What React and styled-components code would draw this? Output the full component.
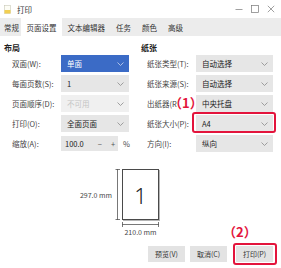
import React from "react";
import styled, { createGlobalStyle } from "styled-components";

const GlobalStyle = createGlobalStyle`
  body {
    margin: 0;
    background: #ffffff;
    font-family: "Noto Sans CJK SC", "Noto Sans", sans-serif;
    color: #2b2b2b;
  }
`;

const Window = styled.div`
  position: relative;
  width: 281px;
  height: 268px;
  display: flex;
  flex-direction: column;
  background: #fff;
  overflow: hidden;
`;

const TitleBar = styled.div`
  height: 18px;
  display: flex;
  align-items: center;
  padding: 0 6px 0 4px;
`;

const Title = styled.div`
  font-size: 7.5px;
  margin-left: 6px;
  color: #333;
  flex: 1;
`;

const Controls = styled.div`
  display: flex;
  align-items: center;
  gap: 8px;
`;

const TabBar = styled.div`
  height: 18px;
  display: flex;
  align-items: stretch;
  background: #ececec;
`;

const Tab = styled.div`
  display: flex;
  align-items: center;
  padding: 0 5.5px;
  font-size: 7.5px;
  color: #333;
  background: ${(p) => (p.$active ? "#ffffff" : "transparent")};
  &:first-child {
    padding: 0 2px 0 4px;
  }
`;

const Columns = styled.div`
  display: flex;
  padding-top: 7px;
`;

const Column = styled.div`
  width: ${(p) => p.$w}px;
  padding-left: ${(p) => p.$pad}px;
  box-sizing: border-box;
`;

const Heading = styled.div`
  font-size: 8px;
  font-weight: 700;
  line-height: 10px;
  margin-bottom: 2px;
  color: #222;
`;

const Row = styled.div`
  display: flex;
  align-items: center;
  height: 17px;
  margin-bottom: 3px;
  padding-left: ${(p) => p.$indent}px;
`;

const Label = styled.div`
  width: 49px;
  font-size: 7.5px;
  color: #444;
  white-space: nowrap;
  overflow: hidden;
`;

const Select = styled.div`
  width: ${(p) => p.$w}px;
  height: 17px;
  box-sizing: border-box;
  display: flex;
  align-items: center;
  justify-content: space-between;
  padding: 0 5px 0 6px;
  font-size: 7.5px;
  background: ${(p) =>
    p.$active ? "#3b6bc6" : p.$disabled ? "#f0f0f0" : "#e6e6e6"};
  color: ${(p) => (p.$active ? "#ffffff" : p.$disabled ? "#c4c4c4" : "#222")};
`;

const Scale = styled.div`
  display: flex;
  align-items: center;
`;

const ScaleBox = styled.div`
  width: 57px;
  height: 15px;
  box-sizing: border-box;
  display: flex;
  align-items: center;
  padding: 0 4px;
  font-size: 7.5px;
  background: #e6e6e6;
  color: #222;
`;

const Step = styled.span`
  margin-left: ${(p) => p.$ml}px;
  color: #555;
`;

const Unit = styled.span`
  font-size: 7.5px;
  margin-left: 5px;
  color: #444;
`;

const Preview = styled.div`
  display: flex;
  margin-top: 14px;
`;

const DimSide = styled.div`
  width: 122px;
  height: 51px;
  display: flex;
  align-items: center;
  justify-content: flex-end;
`;

const DimText = styled.div`
  font-size: 7px;
  color: #444;
  white-space: nowrap;
`;

const PageCol = styled.div`
  display: flex;
  flex-direction: column;
  align-items: center;
  width: 37px;
`;

const Page = styled.div`
  width: 37px;
  height: 51px;
  box-sizing: border-box;
  border: 1px solid #4a4a4a;
  box-shadow: 1px 1px 0 #b5b5b5;
  display: flex;
  align-items: center;
  justify-content: center;
  font-family: "Noto Sans", sans-serif;
  font-size: 22px;
  font-weight: 300;
  color: #222;
`;

const Footer = styled.div`
  margin-top: auto;
  display: flex;
  justify-content: flex-end;
  padding: 0 8px 6px 0;
  gap: 5px;
`;

const Button = styled.div`
  width: 37px;
  height: 16px;
  display: flex;
  align-items: center;
  justify-content: center;
  font-size: 7px;
  background: #e3e3e3;
  color: #333;
  margin-left: ${(p) => p.$ml || 0}px;
`;

const Mark = styled.div`
  position: absolute;
  left: ${(p) => p.$x}px;
  top: ${(p) => p.$y}px;
  font-size: 13px;
  font-weight: 700;
  line-height: 14px;
  color: #e3143c;
  white-space: nowrap;
`;

const Frame = styled.div`
  position: absolute;
  left: ${(p) => p.$x}px;
  top: ${(p) => p.$y}px;
  width: ${(p) => p.$w}px;
  height: ${(p) => p.$h}px;
  box-sizing: border-box;
  border: 2px solid #e3143c;
  border-radius: 3px;
`;

const Chevron = ({ light }) => (
  <svg width="7" height="4" viewBox="0 0 7 4">
    <polyline
      points="0.5,0.5 3.5,3.5 6.5,0.5"
      fill="none"
      stroke={light ? "#c9d6f0" : "#8a8a8a"}
      strokeWidth="0.8"
    />
  </svg>
);

const AppIcon = () => (
  <svg width="7" height="9" viewBox="0 0 7 9">
    <rect x="0.5" y="0.5" width="6" height="8" fill="#fdfdf5" stroke="#c8c8b8" strokeWidth="0.6" />
    <rect x="0.5" y="5" width="6" height="3.5" fill="#f2cf52" />
  </svg>
);

const WinControls = () => (
  <Controls>
    <svg width="8" height="8" viewBox="0 0 8 8">
      <line x1="0.5" y1="4.5" x2="7.5" y2="4.5" stroke="#777" strokeWidth="0.7" />
    </svg>
    <svg width="8" height="8" viewBox="0 0 8 8">
      <rect x="0.5" y="0.5" width="7" height="7" fill="none" stroke="#777" strokeWidth="0.7" />
    </svg>
    <svg width="8" height="8" viewBox="0 0 8 8">
      <path d="M0.8 0.8 L7.2 7.2 M7.2 0.8 L0.8 7.2" stroke="#777" strokeWidth="0.7" />
    </svg>
  </Controls>
);

const VDim = () => (
  <svg width="7" height="51" viewBox="0 0 7 51" style={{ marginLeft: 3 }}>
    <line x1="2.5" y1="0" x2="2.5" y2="51" stroke="#555" strokeWidth="0.8" />
    <line x1="0.5" y1="0.5" x2="5" y2="0.5" stroke="#555" strokeWidth="0.8" />
    <line x1="0.5" y1="50.5" x2="5" y2="50.5" stroke="#555" strokeWidth="0.8" />
  </svg>
);

const HDim = () => (
  <svg width="37" height="5" viewBox="0 0 37 5" style={{ marginTop: 2 }}>
    <line x1="0" y1="2.5" x2="37" y2="2.5" stroke="#555" strokeWidth="0.8" />
    <line x1="0.5" y1="0" x2="0.5" y2="5" stroke="#555" strokeWidth="0.8" />
    <line x1="36.5" y1="0" x2="36.5" y2="5" stroke="#555" strokeWidth="0.8" />
  </svg>
);

const tabs = ["常规", "页面设置", "文本编辑器", "任务", "颜色", "高级"];

const layout = [
  { label: "双面(W):", value: "单面", active: true },
  { label: "每面页数(S):", value: "1" },
  { label: "页面顺序(D):", value: "不可用", disabled: true },
  { label: "打印(O):", value: "全面页面" },
];

// 出纸器 label is cut by the (1) callout in the screenshot
const paper = [
  { label: "纸张类型(T):", value: "自动选择" },
  { label: "纸张来源(S):", value: "自动选择" },
  { label: "出纸器(R", value: "中央托盘", short: true },
  { label: "纸张大小(P):", value: "A4" },
  { label: "方向(I):", value: "纵向" },
];

export default function App() {
  return (
    <Window>
      <GlobalStyle />
      <TitleBar>
        <AppIcon />
        <Title>打印</Title>
        <WinControls />
      </TitleBar>
      <TabBar>
        {tabs.map((t) => (
          <Tab key={t} $active={t === "页面设置"}>
            {t}
          </Tab>
        ))}
      </TabBar>

      <Columns>
        <Column $w={141} $pad={4}>
          <Heading>布局</Heading>
          {layout.map((r) => (
            <Row key={r.label} $indent={8}>
              <Label>{r.label}</Label>
              <Select $w={68} $active={r.active} $disabled={r.disabled}>
                <span>{r.value}</span>
                <Chevron light={r.active} />
              </Select>
            </Row>
          ))}
          <Row $indent={8}>
            <Label>缩放(A):</Label>
            <Scale>
              <ScaleBox>
                <span>100.0</span>
                <Step $ml={14}>−</Step>
                <Step $ml={9}>+</Step>
              </ScaleBox>
              <Unit>%</Unit>
            </Scale>
          </Row>
        </Column>
        <Column $w={140} $pad={0}>
          <Heading>纸张</Heading>
          {paper.map((r) => (
            <Row key={r.label} $indent={6}>
              <Label>{r.label}</Label>
              <Select $w={77}>
                <span>{r.value}</span>
                <Chevron />
              </Select>
            </Row>
          ))}
        </Column>
      </Columns>

      <Preview>
        <DimSide>
          <DimText>297.0 mm</DimText>
          <VDim />
        </DimSide>
        <PageCol>
          <Page>1</Page>
          <HDim />
          <DimText>210.0 mm</DimText>
        </PageCol>
      </Preview>

      <Footer>
        <Button>预览(V)</Button>
        <Button>取消(C)</Button>
        <Button $ml={4}>打印(P)</Button>
      </Footer>

      <Frame $x={192} $y={112} $w={84} $h={21} />
      <Mark $x={169} $y={96}>（1）</Mark>
      <Frame $x={233} $y={243} $w={44} $h={22} />
      <Mark $x={223} $y={225}>（2）</Mark>
    </Window>
  );
}
